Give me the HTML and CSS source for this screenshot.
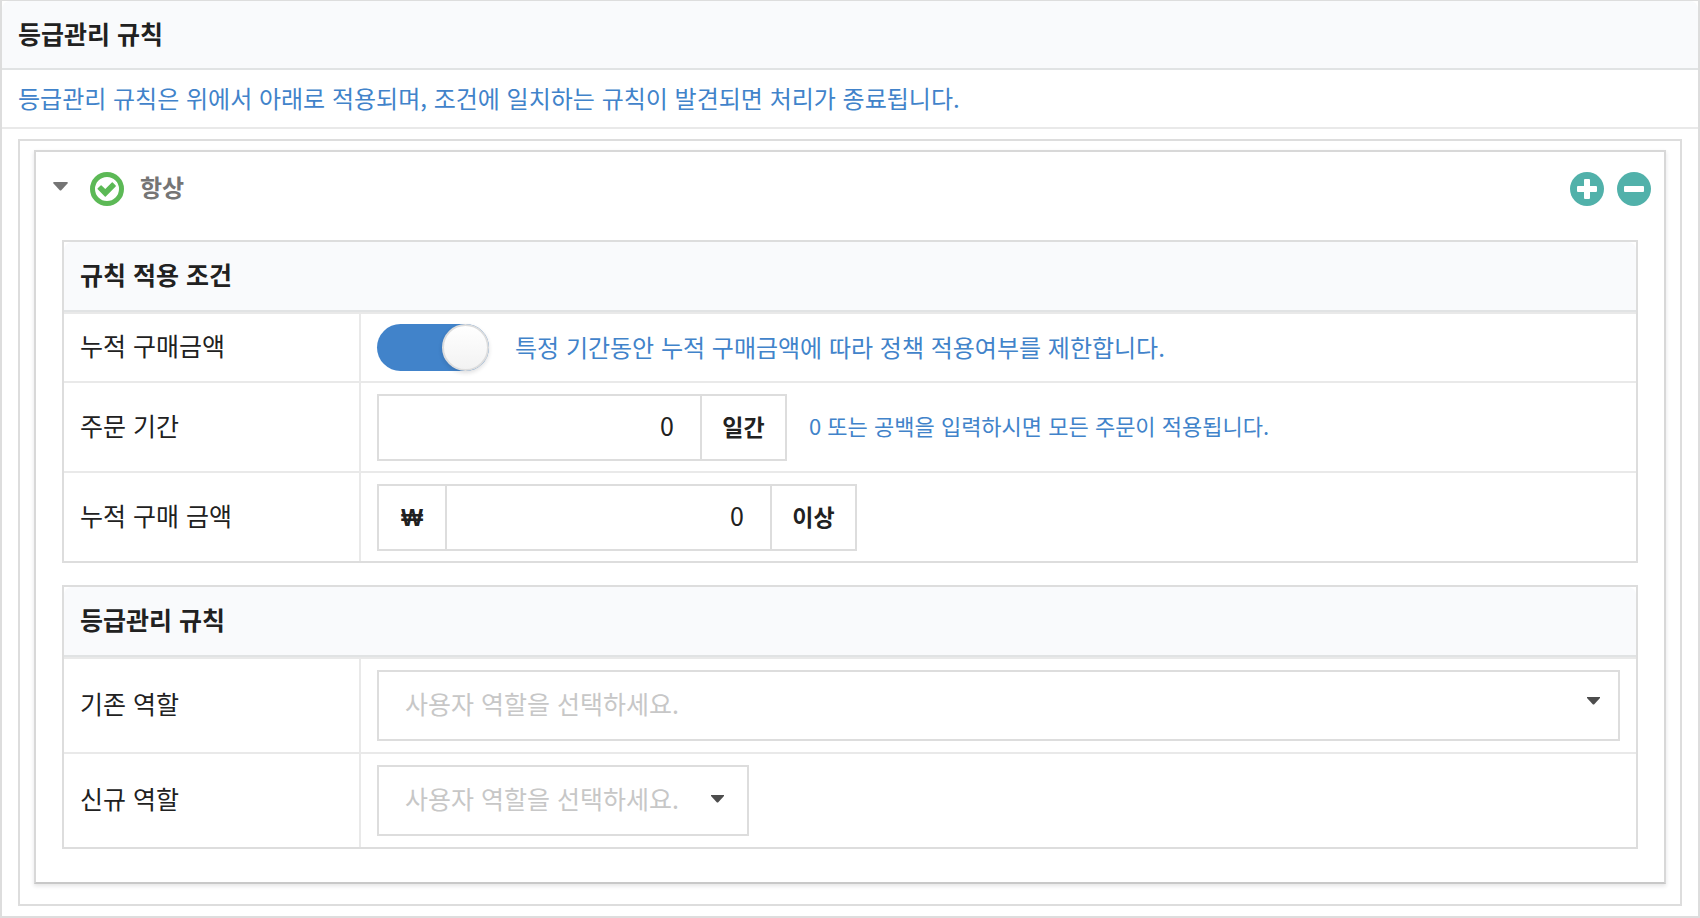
FILE: index.html
```html
<!DOCTYPE html>
<html lang="ko">
<head>
  <meta charset="UTF-8">
  <meta name="viewport" content="width=device-width, initial-scale=1">
  <title>등급관리 규칙</title>
  <link rel="stylesheet" href="styles.css">
</head>
<body>
  <section class="panel">
    <h1 class="panel-title">등급관리 규칙</h1>
    <p class="panel-desc">등급관리 규칙은 위에서 아래로 적용되며, 조건에 일치하는 규칙이 발견되면 처리가 종료됩니다.</p>

    <div class="rules">
      <div class="rule">
        <div class="rule-head">
          <button type="button" class="rule-toggle" aria-expanded="true" aria-label="접기">
            <svg width="15" height="9" viewBox="0 0 15 9"><path d="M1 0h13q1.400 .4 .5 1.400l-6 6.600q-1 1-2 0l-6-6.600Q-.4 .4 1 0z" fill="#757575"/></svg>
          </button>
          <svg class="rule-state" width="34" height="34" viewBox="0 0 34 34">
            <circle cx="17" cy="17" r="14.500" fill="none" stroke="#5cb956" stroke-width="5"/>
            <path d="M8.200 16.800l2.900-2.900 4.200 4.200 7-7.100 2.900 2.900-9.900 10.200z" fill="#5cb956" stroke="#5cb956" stroke-width="1.400" stroke-linejoin="round"/>
          </svg>
          <h2 class="rule-name">항상</h2>
          <div class="rule-actions">
            <button type="button" aria-label="규칙 추가">
              <svg width="34" height="34" viewBox="0 0 34 34">
                <circle cx="17" cy="17" r="17" fill="#51b1aa"/>
                <path d="M15 7h4q1 0 1 1v6h6q1 0 1 1v4q0 1-1 1h-6v6q0 1-1 1h-4q-1 0-1-1v-6H8q-1 0-1-1v-4q0-1 1-1h6V8q0-1 1-1z" fill="#fff"/>
              </svg>
            </button>
            <button type="button" aria-label="규칙 삭제">
              <svg width="34" height="34" viewBox="0 0 34 34">
                <circle cx="17" cy="17" r="17" fill="#51b1aa"/>
                <rect x="7" y="14" width="20" height="6" rx="1" fill="#fff"/>
              </svg>
            </button>
          </div>
        </div>

        <div class="rule-body">
          <!-- conditions -->
          <table class="grid">
            <colgroup>
              <col class="col-name">
              <col>
            </colgroup>
            <thead>
              <tr><th colspan="2">규칙 적용 조건</th></tr>
            </thead>
            <tbody>
              <tr>
                <td><label for="use-amount">누적 구매금액</label></td>
                <td class="tight">
                  <div class="field">
                    <input type="checkbox" class="switch" id="use-amount" checked>
                    <label class="switch-text" for="use-amount">특정 기간동안 누적 구매금액에 따라 정책 적용여부를 제한합니다.</label>
                  </div>
                </td>
              </tr>
              <tr>
                <td><label for="period">주문 기간</label></td>
                <td>
                  <div class="field">
                    <input type="text" class="number" id="period" inputmode="numeric" value="0">
                    <span class="unit">일간</span>
                    <span class="hint">0 또는 공백을 입력하시면 모든 주문이 적용됩니다.</span>
                  </div>
                </td>
              </tr>
              <tr>
                <td><label for="amount">누적 구매 금액</label></td>
                <td>
                  <div class="field">
                    <span class="unit prefix">₩</span>
                    <input type="text" class="number" id="amount" inputmode="numeric" value="0">
                    <span class="unit">이상</span>
                  </div>
                </td>
              </tr>
            </tbody>
          </table>

          <!-- roles -->
          <table class="grid">
            <colgroup>
              <col class="col-name">
              <col>
            </colgroup>
            <thead>
              <tr><th colspan="2">등급관리 규칙</th></tr>
            </thead>
            <tbody>
              <tr>
                <td><label for="old-role">기존 역할</label></td>
                <td>
                  <div class="dropdown fluid">
                    <select id="old-role"><option value="">사용자 역할을 선택하세요.</option></select>
                    <svg class="caret" width="13" height="8" viewBox="0 0 13 8"><path d="M0 0h13v1L7.500 7q-1 1-2 0L0 1z" fill="#4d4d4d"/></svg>
                  </div>
                </td>
              </tr>
              <tr>
                <td><label for="new-role">신규 역할</label></td>
                <td>
                  <div class="dropdown">
                    <select id="new-role"><option value="">사용자 역할을 선택하세요.</option></select>
                    <svg class="caret" width="13" height="8" viewBox="0 0 13 8"><path d="M0 0h13v1L7.500 7q-1 1-2 0L0 1z" fill="#4d4d4d"/></svg>
                  </div>
                </td>
              </tr>
            </tbody>
          </table>
        </div>
      </div>
    </div>
  </section>
</body>
</html>
```

FILE: styles.css
```css
* {
    box-sizing: border-box;
}
body {
    background-color: #fff;
    color: #212121;
    font-family: "Noto Sans CJK KR", sans-serif;
    font-size: 25px;
    line-height: 36px;
    margin: 0;
}
button, input, select {
    color: inherit;
    font: inherit;
}
button {
    background: none;
    border: 0;
    cursor: pointer;
    padding: 0;
}
svg {
    display: block;
}

/* panel */
.panel {
    border: solid 2px #ddd;
    border-top-width: 1px;
    padding-bottom: 10px;
}
.panel-title {
    background-color: #f9fafc;
    border-bottom: solid 2px #e1e3e4;
    border-radius: 8px 8px 0 0;
    font-size: 25px;
    font-weight: bold;
    margin: 0;
    padding: 14px 16px 17px;
}
.panel-desc {
    border-bottom: solid 2px #e9e9e9;
    color: #4183ca;
    font-size: 24px;
    margin: 0;
    padding: 10px 16px 11px;
}

/* rule */
.rules {
    border: solid 2px #ddd;
    margin: 10px 16px 0;
    padding: 9px 14px 20px;
}
.rule {
    border: solid 2px #d8d8d8;
    border-bottom-color: #c8c8c8;
    box-shadow: 0 2px 4px rgba(34,36,38,.12);
}
.rule-head {
    align-items: center;
    display: flex;
    height: 74px;
    padding: 0 13px 0 17px;
}
.rule-toggle {
    padding-bottom: 6px;
}
.rule-state {
    margin-left: 22px;
}
.rule-name {
    color: #757575;
    flex: 1;
    font-size: 24px;
    font-weight: bold;
    margin: 0 0 0 16px;
    padding-bottom: 4px;
}
.rule-actions {
    display: flex;
    gap: 13px;
}
.rule-body {
    display: flex;
    flex-direction: column;
    gap: 22px;
    padding: 14px 26px 33px;
}

/* table */
.grid {
    border: solid 2px #ddd;
    border-spacing: 0;
    table-layout: fixed;
    width: 100%;
}
.col-name {
    width: 295px;
}
.grid th {
    background-color: #f9fafc;
    border-bottom: solid 2px #e1e3e4;
    border-radius: 8px 8px 0 0;
    padding: 14px 16px 18px;
    text-align: left;
}
.grid td {
    border-top: solid 2px #e9e9e9;
    padding: 11px 16px 10px;
}
.grid td:first-child {
    padding: 8px 16px 13px;
}
.grid td + td {
    border-left: solid 2px #e9e9e9;
}
.grid .tight {
    padding-top: 10px;
}

/* controls */
.field {
    align-items: center;
    display: flex;
}
.number {
    background-color: #fff;
    border: solid 2px #ddd;
    border-radius: 0;
    border-right: 0;
    height: 67px;
    outline: 0;
    padding: 0 26px 5px;
    text-align: right;
    width: 323px;
}
.unit {
    border: solid 2px #ddd;
    flex: none;
    font-size: 23px;
    font-weight: bold;
    height: 67px;
    line-height: 60px;
    text-align: center;
    width: 87px;
}
.prefix {
    font-family: "Liberation Sans", sans-serif;
    line-height: 64px;
    width: 70px;
}
.prefix + .number {
    border-left: 0;
}
.hint {
    color: #4183ca;
    font-size: 22px;
    margin-left: 22px;
    padding-bottom: 6px;
}
.switch {
    appearance: none;
    background-color: #ccc;
    border-radius: 24px;
    cursor: pointer;
    display: flex;
    flex: none;
    height: 47px;
    margin: 0;
    width: 112px;
}
.switch::before {
    background: linear-gradient(#fff, #f2f2f2);
    border: solid 2px #ddd;
    border-radius: 50%;
    box-shadow: 0 2px 4px rgba(34,36,38,.15);
    box-sizing: border-box;
    content: "";
    height: 47px;
    width: 47px;
}
.switch:checked {
    background-color: #4183ca;
    justify-content: flex-end;
}
.switch-text {
    color: #4183ca;
    font-size: 24px;
    margin-left: 26px;
    padding-bottom: 2px;
}

/* dropdown */
.dropdown {
    display: grid;
    margin-bottom: 1px;
    position: relative;
    width: 372px;
}
.dropdown.fluid {
    width: 100%;
}
.dropdown select {
    appearance: none;
    background-color: #fff;
    border: solid 2px #ddd;
    border-radius: 0;
    color: #c7c7c7;
    height: 71px;
    outline: 0;
    padding: 0 26px 6px;
    width: 100%;
}
.dropdown .caret {
    pointer-events: none;
    position: absolute;
    right: 25px;
    top: 30px;
}
.dropdown.fluid .caret {
    right: 20px;
    top: 27px;
}
```
